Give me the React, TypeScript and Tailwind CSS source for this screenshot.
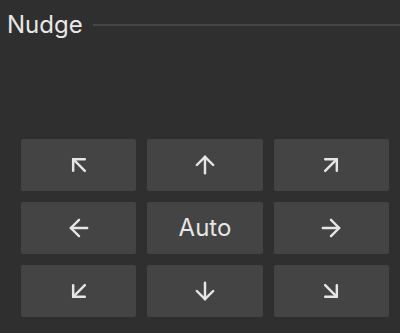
import React from 'react'
import { ArrowUpLeft, ArrowUp, ArrowUpRight, ArrowLeft, ArrowRight, ArrowDownLeft, ArrowDown, ArrowDownRight } from 'lucide-react'

const icon = { size: 28, strokeWidth: 2.1 }

function NudgeButton({ children }: { children: React.ReactNode }) {
    return (
        <button className="h-[52px] flex items-center justify-center rounded-[2px] bg-[#444444] text-[#e6e6e6] text-[24px] leading-none">
            {children}
        </button>
    )
}

export default function App() {
    return (
        <div
            className="w-[400px] h-[333px] bg-[#2f2f2f] overflow-hidden flex flex-col"
            style={{ fontFamily: 'Inter, "Noto Sans", sans-serif' }}
        >
            <div className="flex items-center pl-[7px] pt-[11px] gap-[10px]">
                <span className="text-[24px] leading-[28px] text-[#e8e8e8]">Nudge</span>
                <div className="flex-1 h-[2px] bg-[#454545]" />
            </div>
            <div className="grid grid-cols-3 gap-[11px] pl-[21px] pr-[11px] mt-[100px]">
                <NudgeButton><ArrowUpLeft {...icon} /></NudgeButton>
                <NudgeButton><ArrowUp {...icon} /></NudgeButton>
                <NudgeButton><ArrowUpRight {...icon} /></NudgeButton>
                <NudgeButton><ArrowLeft {...icon} /></NudgeButton>
                <NudgeButton>Auto</NudgeButton>
                <NudgeButton><ArrowRight {...icon} /></NudgeButton>
                <NudgeButton><ArrowDownLeft {...icon} /></NudgeButton>
                <NudgeButton><ArrowDown {...icon} /></NudgeButton>
                <NudgeButton><ArrowDownRight {...icon} /></NudgeButton>
            </div>
        </div>
    )
}
